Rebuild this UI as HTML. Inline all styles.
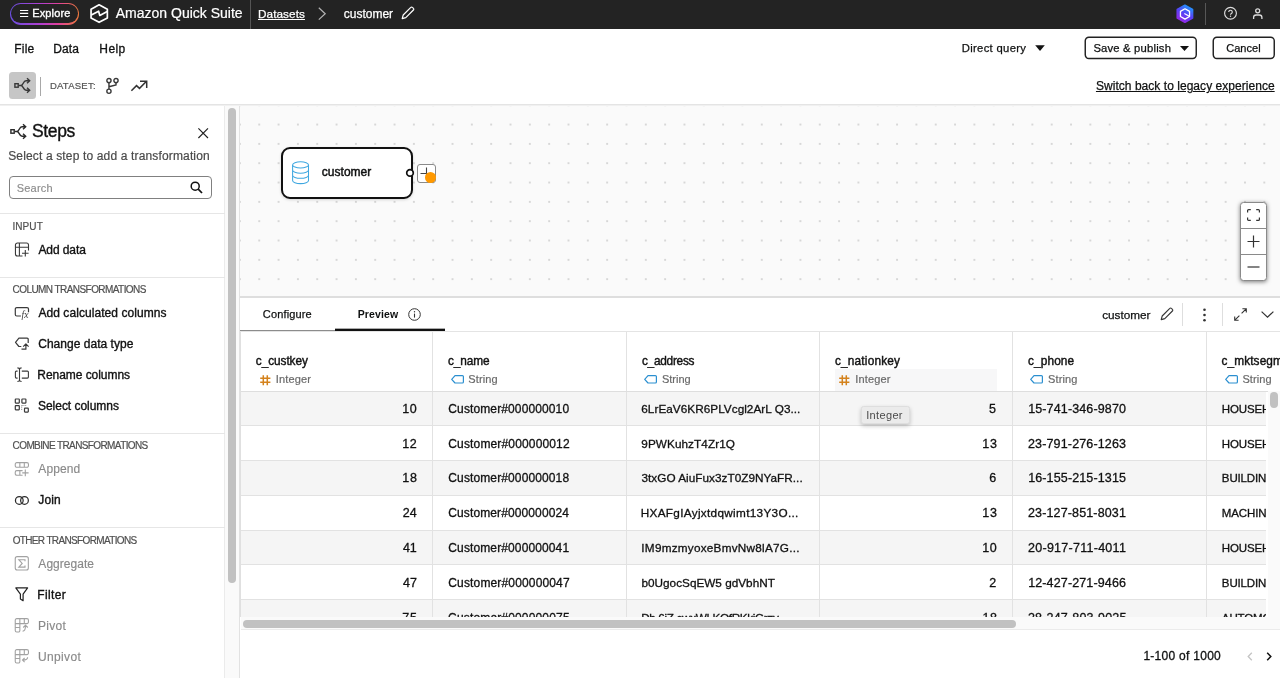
<!DOCTYPE html>
<html lang="en">
<head>
<meta charset="utf-8">
<title>customer - Amazon Quick Suite</title>
<style>
*{box-sizing:border-box;margin:0;padding:0}
html,body{width:1280px;height:678px;overflow:hidden;background:#fff}
body{font-family:"Liberation Sans",sans-serif;color:#0f1111;position:relative;font-size:12px}
.abs{position:absolute}
.t{position:absolute;white-space:nowrap;line-height:1}
svg{position:absolute;overflow:visible}
#topbar{left:0;top:0;width:1280px;height:29px;background:#232323}
#topbar .t{color:#fff}
#panel{left:0;top:105px;width:224px;height:573px;background:#fff}
#canvas{left:240px;top:105px;width:1040px;height:192px;background-color:#fafafa;background-image:radial-gradient(circle,#c2c2c2 0.5px,rgba(194,194,194,0) 1px);background-size:19.33px 19.33px;background-position:9.585px -9.465px}
.sec{-webkit-text-stroke:0.2px #505050;position:absolute;left:13px;font-size:9.5px;color:#505050;letter-spacing:-0.25px;line-height:1;white-space:nowrap}
.item{position:absolute;left:38.4px;font-size:12px;color:#111;line-height:1;white-space:nowrap;-webkit-text-stroke:0.35px #111}
.item.dis{color:#8a8a8a;-webkit-text-stroke:0.15px #8a8a8a}
.hr{position:absolute;left:0;width:225px;height:1px;background:#e6e6e6}
.trow{position:absolute;left:0;width:1200px;height:34.8px;border-bottom:1px solid #e2e2e2;background:#fff}
.trow.odd{background:#f5f5f5}
.cell{position:absolute;font-size:12px;letter-spacing:0.09px;line-height:1;white-space:nowrap;color:#111;-webkit-text-stroke:0.3px #111}
.vl{position:absolute;width:1px;background:#e2e2e2}
.hn{position:absolute;font-size:11.85px;line-height:1;white-space:nowrap;color:#111;-webkit-text-stroke:0.4px #111}
.ht{-webkit-text-stroke:0.2px #6a6a6a;position:absolute;font-size:11px;letter-spacing:0.04px;line-height:1;white-space:nowrap;color:#6a6a6a}
</style>
</head>
<body>
<div id="root" style="position:absolute;left:0;top:0;width:1280px;height:678px;will-change:transform">

<!-- TOP BAR -->
<div id="topbar" class="abs">
  <div class="abs" style="left:10px;top:2.5px;width:69px;height:22px;border-radius:11px;background:linear-gradient(90deg,#6a4fe0 0%,#b13fd0 45%,#e0409a 70%,#ee7a3c 100%)"></div>
  <div class="abs" style="left:11.4px;top:3.9px;width:66.2px;height:19.2px;border-radius:9.6px;background:#232323"></div>
  <svg style="left:20px;top:9px" width="9" height="9" viewBox="0 0 9 9"><path d="M0 1.500 H8.200 M0 4.450 H8.200 M0 7.500 H8.200" stroke="#fff" stroke-width="1.200" fill="none"/></svg>
  <div class="t" id="t_explore" style="left:32.2px;top:8px;font-size:11px;-webkit-text-stroke:0.35px #fff;letter-spacing:0.14px">Explore</div>
  <svg style="left:89px;top:3px" width="20" height="22" viewBox="0 0 20 22"><path d="M10.1 1.750 L18.350 6.200 V14.900 L10.100 19.300 L2.050 14.900 V6.200 Z" fill="none" stroke="#fff" stroke-width="1.700" stroke-linejoin="round"/><path d="M2.300 12 L9.600 8.200 L10.800 12.500 L18.200 8.400" fill="none" stroke="#fff" stroke-width="1.700" stroke-linejoin="round"/></svg>
  <div class="t" id="t_brand" style="-webkit-text-stroke:0.2px #fff;left:115.79px;top:5.5px;font-size:14px;letter-spacing:-0px">Amazon Quick Suite</div>
  <div class="abs" style="left:250px;top:0;width:1px;height:29px;background:#555"></div>
  <div class="t" id="t_datasets" style="left:258.03px;top:8px;font-size:11.75px;text-decoration:underline;text-underline-offset:1px;-webkit-text-stroke:0.25px #fff;letter-spacing:0.07px">Datasets</div>
  <svg style="left:318px;top:7px" width="9" height="14" viewBox="0 0 9 14"><path d="M0.800 0.800 L7.200 6.700 L0.800 12.600" fill="none" stroke="#b4b4b4" stroke-width="1.200"/></svg>
  <div class="t" id="t_cust" style="left:343.71px;top:8px;font-size:12px;-webkit-text-stroke:0.25px #fff;letter-spacing:0px">customer</div>
  <svg style="left:401px;top:6px" width="14" height="14" viewBox="0 0 14 14"><path d="M1.2 12.6 L2.2 9 L9.8 1.4 a1.1 1.1 0 0 1 1.6 0 l1 1 a1.1 1.1 0 0 1 0 1.6 L4.8 11.6 Z" fill="none" stroke="#fff" stroke-width="1.2" stroke-linejoin="round"/></svg>
  <!-- right icons -->
  <svg style="left:1176px;top:3.500px" width="18" height="20" viewBox="0 0 18 20"><defs><linearGradient id="qg" x1="0.75" y1="0" x2="0.25" y2="1"><stop offset="0" stop-color="#1f9bff"/><stop offset="0.5" stop-color="#5840f5"/><stop offset="1" stop-color="#9a27e6"/></linearGradient></defs><path d="M8.900 1.300 L16.550 5.500 V14 L8.900 18.200 L1.250 14 V5.500 Z" fill="url(#qg)" stroke="url(#qg)" stroke-width="1.600" stroke-linejoin="round"/><path d="M9 4.800 L13.550 7.400 V12.500 L9 15.100 L4.450 12.500 V7.400 Z" fill="none" stroke="#fff" stroke-width="1.300" stroke-linejoin="round"/><path d="M8.300 9.500 L13.300 12.200" stroke="#fff" stroke-width="1.300"/></svg>
  <div class="abs" style="left:1204.600px;top:2.500px;width:1.400px;height:22.500px;background:#575757"></div>
  <svg style="left:1223px;top:6px" width="15" height="15" viewBox="0 0 15 15"><circle cx="7.500" cy="7.250" r="5.900" fill="none" stroke="#dcdcdc" stroke-width="1.150"/><path d="M5.700 5.900 a1.800 1.700 0 1 1 2.700 1.500 c-.7.400-.9.700-.9 1.300" fill="none" stroke="#dcdcdc" stroke-width="1.100"/><circle cx="7.500" cy="10.300" r="0.700" fill="#dcdcdc"/></svg>
  <svg style="left:1252px;top:7px" width="12" height="13" viewBox="0 0 12 13"><circle cx="5.700" cy="3.800" r="2" fill="none" stroke="#dcdcdc" stroke-width="1.300"/><path d="M1.600 11.900 V10.500 a2.500 2.500 0 0 1 2.500 -2.500 h3.300 a2.500 2.500 0 0 1 2.500 2.500 V11.900" fill="none" stroke="#dcdcdc" stroke-width="1.300"/></svg>
</div>

<!-- MENU BAR -->
<div class="t" id="m_file" style="left:14.34px;top:43px;font-size:12px;-webkit-text-stroke:0.3px #111;letter-spacing:0.17px">File</div>
<div class="t" id="m_data" style="left:53.29px;top:43px;font-size:12px;-webkit-text-stroke:0.3px #111;letter-spacing:0.09px">Data</div>
<div class="t" id="m_help" style="left:99.34px;top:43px;font-size:12px;letter-spacing:0.39px;-webkit-text-stroke:0.3px #111">Help</div>

<div class="t" id="m_dq" style="left:961.74px;top:43px;font-size:11.25px;letter-spacing:0.32px;-webkit-text-stroke:0.25px #111">Direct query</div>
<svg style="left:1035px;top:45px" width="10" height="6" viewBox="0 0 10 6"><path d="M0.2 0.300 H9.800 L5 5.900 Z" fill="#111"/></svg>
<svg style="left:1084px;top:36.100px" width="114" height="24" viewBox="0 0 114 24"><rect x="1.250" y="1.250" width="111" height="21.200" rx="3.600" fill="#fff" stroke="#222" stroke-width="1.450"/></svg>
<div class="t" id="m_sp" style="left:1093.38px;top:43px;font-size:11.25px;-webkit-text-stroke:0.25px #111;letter-spacing:0.19px">Save &amp; publish</div>
<svg style="left:1180px;top:45.5px" width="9" height="5" viewBox="0 0 9 5"><path d="M0 0 H9 L4.500 5 Z" fill="#111"/></svg>
<svg style="left:1211.500px;top:36.100px" width="64" height="24" viewBox="0 0 64 24"><rect x="1.250" y="1.250" width="61" height="21.200" rx="3.600" fill="#fff" stroke="#222" stroke-width="1.450"/></svg>
<div class="t" id="m_cancel" style="left:1226.23px;top:43px;font-size:11px;-webkit-text-stroke:0.25px #111;letter-spacing:0.03px">Cancel</div>

<!-- TOOLBAR ROW -->
<div class="abs" style="left:9px;top:72px;width:27px;height:27px;border-radius:3.5px;background:#c6c6c6"></div>
<svg style="left:14px;top:77px" width="17" height="17" viewBox="0 0 17 17"><rect x="0.9" y="6.700" width="3.300" height="3.500" fill="none" stroke="#383838" stroke-width="1.400"/><path d="M4.900 8.450 H7.300 M7 8.450 C9.500 8.450 9 3.700 12 3.700 H15.300 M13 1.200 L15.700 3.700 L13 6.200 M7 8.450 C9.500 8.450 9 13.200 12 13.200 H15.300 M13 10.700 L15.700 13.200 L13 15.700" fill="none" stroke="#383838" stroke-width="1.400"/></svg>
<div class="abs" style="left:39.5px;top:77px;width:1.5px;height:19px;background:#a8a8a8"></div>
<div class="t" id="tb_ds" style="-webkit-text-stroke:0.2px #555;left:49.89px;top:81px;font-size:9.5px;color:#555;letter-spacing:0.24px">DATASET:</div>
<svg style="left:105px;top:77px" width="16" height="18" viewBox="0 0 16 18"><g fill="none" stroke="#3a3a3a" stroke-width="1.400"><circle cx="3.950" cy="3.600" r="2.100"/><circle cx="11" cy="3.600" r="2.100"/><circle cx="3.950" cy="14.250" r="2.100"/><path d="M3.950 5.700 V12.150 M11 5.700 V8 L3.950 9.800"/></g></svg>
<svg style="left:131px;top:79px" width="17" height="13" viewBox="0 0 17 13"><path d="M0.400 11.700 L5.500 6.600 L8.500 9.400 L15.500 2.300 M9 2.300 H15.700 V8.900" fill="none" stroke="#333" stroke-width="1.500"/></svg>
<div class="t" id="tb_switch" style="left:1095.95px;top:80px;font-size:12px;text-decoration:underline;text-underline-offset:1px;-webkit-text-stroke:0.25px #111;letter-spacing:0.04px">Switch back to legacy experience</div>

<div class="abs" style="left:0;top:104px;width:1280px;height:1px;background:#e4e4e4"></div><div class="abs" style="left:0;top:105px;width:1280px;height:1px;background:#f0f0f0;z-index:3"></div>

<!-- LEFT PANEL -->
<div id="panel" class="abs"></div>
<div class="abs" style="left:224px;top:105px;width:16px;height:573px;background:#fafafa;border-left:1.5px solid #ebebeb;border-right:1.7px solid #e2e2e2"></div>
<div class="abs" style="left:228px;top:108px;width:8px;height:474.5px;border-radius:4px;background:#c1c1c1"></div>

<svg style="left:10.1px;top:123.4px" width="17" height="17" viewBox="0 0 17 17"><rect x="0.9" y="6.700" width="3.300" height="3.500" fill="none" stroke="#2a2a2a" stroke-width="1.400"/><path d="M4.900 8.450 H7.300 M7 8.450 C9.500 8.450 9 3.700 12 3.700 H15.300 M13 1.200 L15.700 3.700 L13 6.200 M7 8.450 C9.500 8.450 9 13.200 12 13.200 H15.300 M13 10.700 L15.700 13.200 L13 15.700" fill="none" stroke="#2a2a2a" stroke-width="1.400"/></svg>
<div class="t" id="p_steps" style="-webkit-text-stroke:0.35px #111;left:32.04px;top:123px;font-size:17.5px;letter-spacing:-0.36px;color:#111">Steps</div>
<svg style="left:197.700px;top:128.400px" width="10.400" height="10.400" viewBox="0 0 10.400 10.400"><path d="M0.400 0.400 L10 10 M10 0.400 L0.400 10" stroke="#222" stroke-width="1.150" fill="none"/></svg>
<div class="t" id="p_sub" style="-webkit-text-stroke:0.2px #4a4a4a;left:8.18px;top:150px;font-size:12px;color:#4a4a4a;letter-spacing:0.15px">Select a step to add a transformation</div>
<div class="abs" style="left:9px;top:176px;width:203px;height:23px;border:1px solid #808080;border-radius:4px;background:#fff"></div>
<div class="t" id="p_search" style="-webkit-text-stroke:0.15px #8c8c8c;left:16.66px;top:183px;font-size:11px;color:#8c8c8c;letter-spacing:0.22px">Search</div>
<svg style="left:190px;top:181px" width="13" height="13" viewBox="0 0 13 13"><circle cx="5.2" cy="5.2" r="4" fill="none" stroke="#111" stroke-width="1.5"/><path d="M8.200 8.200 L12 12" stroke="#111" stroke-width="1.7" fill="none"/></svg>

<div class="hr" style="top:213px"></div>
<div class="sec" id="s_input" style="top:222px;font-size:10px;letter-spacing:0.09px;left:12.43px">INPUT</div>
<div class="item" id="i_adddata" style="top:244px;font-size:12px;letter-spacing:-0.09px;left:38.4px">Add data</div>

<div class="hr" style="top:277px"></div>
<div class="sec" id="s_col" style="top:285px;font-size:10px;letter-spacing:-0.57px;left:12.62px">COLUMN TRANSFORMATIONS</div>
<div class="item" id="i_calc" style="top:307px;font-size:12px;letter-spacing:0.07px;left:38.4px">Add calculated columns</div>
<div class="item" id="i_change" style="top:338px;font-size:12px;letter-spacing:0.03px;left:38.2px">Change data type</div>
<div class="item" id="i_rename" style="top:369px;font-size:12px;letter-spacing:-0.05px;left:37.31px">Rename columns</div>
<div class="item" id="i_select" style="top:400px;font-size:12px;letter-spacing:-0.03px;left:38px">Select columns</div>

<div class="hr" style="top:433px"></div>
<div class="sec" id="s_comb" style="top:441px;font-size:10px;letter-spacing:-0.61px;left:12.62px">COMBINE TRANSFORMATIONS</div>
<div class="item dis" id="i_append" style="top:463px;font-size:12px;letter-spacing:0.09px;left:38.35px">Append</div>
<div class="item" id="i_join" style="top:494px;font-size:12px;letter-spacing:0.15px;left:38.24px">Join</div>

<div class="hr" style="top:527px"></div>
<div class="sec" id="s_other" style="top:536px;font-size:10px;letter-spacing:-0.64px;left:12.64px">OTHER TRANSFORMATIONS</div>
<div class="item dis" id="i_agg" style="top:558px;font-size:12px;letter-spacing:0.03px;left:38.35px">Aggregate</div>
<div class="item" id="i_filter" style="top:589px;font-size:12px;letter-spacing:0.38px;left:37.31px">Filter</div>
<div class="item dis" id="i_pivot" style="top:620px;font-size:12px;letter-spacing:0.29px;left:37.94px">Pivot</div>
<div class="item dis" id="i_unpivot" style="top:651px;font-size:12px;letter-spacing:0.35px;left:38px">Unpivot</div>

<svg style="left:14px;top:242px" width="16" height="16" viewBox="0 0 16 16"><path d="M14.5 8.6 V3 a2 2 0 0 0 -2 -2 H3.45 a2 2 0 0 0 -2 2 V12.05 a2 2 0 0 0 2 2 H8.5 M1.45 5.3 H14.5 M5.4 0.95 V14.05 M8 11.3 H14.6 M11.3 8 V14.6" fill="none" stroke="#3a3a3a" stroke-width="1.1"/></svg>
<svg style="left:14px;top:306px" width="16" height="16" viewBox="0 0 16 16"><path d="M14.5 6.3 V3.1 a1.5 1.5 0 0 0 -1.5 -1.5 H2.8 a1.5 1.5 0 0 0 -1.5 1.5 V8.5 a1.5 1.5 0 0 0 1.5 1.5 H6.9" fill="none" stroke="#3a3a3a" stroke-width="1.2"/><text x="7.6" y="11.9" font-family="Liberation Serif, serif" font-style="italic" font-size="9.5" fill="#3a3a3a">fx</text></svg>
<svg style="left:14px;top:337px" width="16" height="16" viewBox="0 0 16 16"><path d="M14.2 6 V2.2 a1 1 0 0 0 -1 -1 H4.9 L1.5 5.4 L4.9 9.500 H7.3 M7.5 12.2 H11.9 V7.2 M9.2 9.600 L11.900 6.900 L14.600 9.600" fill="none" stroke="#3a3a3a" stroke-width="1.2" stroke-linejoin="round"/></svg>
<svg style="left:14px;top:367px" width="16" height="16" viewBox="0 0 16 16"><path d="M3.6 4.1 H2.4 a1 1 0 0 0 -1 1 V10.1 a1 1 0 0 0 1 1 H3.600 M7.8 4.100 H13.400 a1 1 0 0 1 1 1 V10.100 a1 1 0 0 1 -1 1 H7.800 M5.500 1.800 V13.600 M3.400 0.900 Q5.500 1 5.500 2.400 Q5.500 1 7.600 0.900 M3.400 14.500 Q5.500 14.400 5.500 13 Q5.500 14.400 7.600 14.500" fill="none" stroke="#3a3a3a" stroke-width="1.1"/></svg>
<svg style="left:14px;top:398px" width="16" height="16" viewBox="0 0 16 16"><g fill="none" stroke="#3a3a3a" stroke-width="1.2"><rect x="1.3" y="1" width="4" height="4.100" rx="0.500"/><rect x="7.900" y="1" width="4" height="4.100" rx="0.500"/><rect x="1.300" y="7.700" width="4" height="4.100" rx="0.500"/><rect x="10.500" y="10.200" width="3.800" height="3.900" rx="0.500"/><path d="M7.700 7.500 H12.500 M7.700 7.500 V12.300" stroke-width="0.900" stroke-dasharray="0.900 0.900" stroke="#777"/></g></svg>
<svg style="left:14px;top:461px" width="16" height="16" viewBox="0 0 16 16"><path d="M2.750 1.650 H12.950 a1.500 1.500 0 0 1 1.500 1.500 V4.750 a1.500 1.500 0 0 1 -1.500 1.500 H2.750 a1.500 1.500 0 0 1 -1.500 -1.500 V3.150 a1.500 1.500 0 0 1 1.500 -1.500 Z M5.850 1.650 V6.250 M10.300 1.650 V6.250 M8.600 9.650 H2.750 a1.500 1.500 0 0 0 -1.500 1.500 V12.700 a1.500 1.500 0 0 0 1.500 1.500 H8.600 M5.850 9.650 V14.200 M8.200 11.850 H14.600 M11.300 8.600 V15.200" fill="none" stroke="#a2a2a2" stroke-width="1.100"/></svg>
<svg style="left:14px;top:495px" width="16" height="12" viewBox="0 0 16 12"><circle cx="5.3" cy="5.4" r="3.85" fill="none" stroke="#2a2a2a" stroke-width="1.25"/><circle cx="10.500" cy="5.400" r="3.850" fill="none" stroke="#2a2a2a" stroke-width="1.250"/></svg>
<svg style="left:14px;top:555px" width="16" height="17" viewBox="0 0 16 17"><rect x="1.250" y="1.650" width="13.100" height="13.400" rx="2" fill="none" stroke="#a2a2a2" stroke-width="1.100"/><path d="M11 6.200 V4.700 H4.800 L8.200 8.400 L4.800 12.100 H11 V10.600" fill="none" stroke="#a2a2a2" stroke-width="1.100"/></svg>
<svg style="left:14px;top:586px" width="16" height="16" viewBox="0 0 16 16"><path d="M1.800 1.900 H13.600 L9.100 8.100 V14.700 L6.400 13 V8.100 Z" fill="none" stroke="#222" stroke-width="1.200" stroke-linejoin="round"/></svg>
<svg style="left:14px;top:617px" width="16" height="16" viewBox="0 0 16 16"><path d="M2.750 1.650 H12.950 a1.500 1.500 0 0 1 1.500 1.500 V5.100 a1.500 1.500 0 0 1 -1.500 1.500 H5.850 V13.500 a1.500 1.500 0 0 1 -1.500 1.500 H2.750 a1.500 1.500 0 0 1 -1.500 -1.500 V3.150 a1.500 1.500 0 0 1 1.500 -1.500 Z M5.850 1.650 V6.600 M10.300 1.650 V6.600 M1.250 6.600 H5.850 M1.250 10.500 H5.850 M8.600 14.300 Q11.500 14 11.500 9 M9.200 10.500 L11.500 8.300 L13.800 10.500" fill="none" stroke="#a2a2a2" stroke-width="1.100"/></svg>
<svg style="left:14px;top:648px" width="16" height="16" viewBox="0 0 16 16"><path d="M2.750 1.650 H12.950 a1.500 1.500 0 0 1 1.500 1.500 V5.100 a1.500 1.500 0 0 1 -1.500 1.500 H5.850 V13.500 a1.500 1.500 0 0 1 -1.500 1.500 H2.750 a1.500 1.500 0 0 1 -1.500 -1.500 V3.150 a1.500 1.500 0 0 1 1.500 -1.500 Z M5.850 1.650 V6.600 M10.300 1.650 V6.600 M1.250 6.600 H5.850 M1.250 10.500 H5.850 M13.600 9.300 Q13.600 12.100 8.900 12.100 M10.600 10 L8.500 12.100 L10.600 14.200" fill="none" stroke="#a2a2a2" stroke-width="1.100"/></svg>

<!-- CANVAS -->
<div id="canvas" class="abs"></div>
<div class="abs" id="node" style="left:281px;top:147px;width:132px;height:52px;border:2px solid #111;border-radius:9px;background:#fff;box-shadow:0 1px 3px rgba(0,0,0,.15)"></div>
<svg style="left:291px;top:160px" width="20" height="25" viewBox="0 0 20 25"><g fill="none" stroke="#3ea7e0" stroke-width="1.050"><ellipse cx="9.550" cy="4.900" rx="7.950" ry="3.100"/><path d="M1.600 4.900 V20.500 A7.950 3.100 0 0 0 17.500 20.500 V4.900 M1.600 10.100 A7.950 3.100 0 0 0 17.500 10.100 M1.600 15.200 A7.950 3.100 0 0 0 17.500 15.200"/></g></svg>
<div class="t" id="n_cust" style="left:321.87px;top:166px;font-size:12px;-webkit-text-stroke:0.45px #111;letter-spacing:0.01px">customer</div>
<svg style="left:405px;top:168px" width="10" height="10" viewBox="0 0 10 10"><circle cx="5" cy="4.900" r="3.300" fill="#fff" stroke="#111" stroke-width="1.700"/></svg>
<div class="abs" style="left:417px;top:164px;width:19px;height:19px;border:1.3px solid #8a8a8a;border-radius:3px;background:#fff"></div>
<svg style="left:420px;top:167px" width="13" height="13" viewBox="0 0 13 13"><path d="M6.5 0.5 V12.5 M0.5 6.5 H12.5" stroke="#444" stroke-width="1.1" fill="none"/></svg>
<div class="abs" style="left:425px;top:172px;width:11px;height:11px;border-radius:50%;background:#ff9900"></div>

<!-- zoom controls -->
<div class="abs" style="left:1239.5px;top:202px;width:27.5px;height:79px;border:1px solid #8a8a8a;border-radius:3.5px;background:#fff;box-shadow:0 1px 4px rgba(0,0,0,.5)"></div>
<div class="abs" style="left:1240px;top:228px;width:26.500px;height:1px;background:#8a8a8a"></div>
<div class="abs" style="left:1240px;top:254px;width:26.500px;height:1px;background:#8a8a8a"></div>
<svg style="left:1247px;top:209px" width="13" height="12" viewBox="0 0 13 12"><path d="M0.6 3.6 V1.6 a1 1 0 0 1 1 -1 H3.800 M9.200 0.6 H11.400 a1 1 0 0 1 1 1 V3.600 M12.400 8.400 V10.400 a1 1 0 0 1 -1 1 H9.200 M3.800 11.400 H1.600 a1 1 0 0 1 -1 -1 V8.400" fill="none" stroke="#333" stroke-width="1.2"/></svg>
<svg style="left:1247px;top:235px" width="13" height="13" viewBox="0 0 13 13"><path d="M6.5 0.500 V12.500 M0.500 6.500 H12.500" stroke="#333" stroke-width="1.2" fill="none"/></svg>
<svg style="left:1247px;top:266px" width="13" height="2" viewBox="0 0 13 2"><path d="M0.500 1 H12.500" stroke="#333" stroke-width="1.2" fill="none"/></svg>

<!-- BOTTOM PANEL -->
<div class="abs" style="left:240px;top:296px;width:1040px;height:2px;background:#dedede"></div>
<div class="abs" style="left:240px;top:298px;width:1040px;height:380px;background:#fff"></div>
<div class="abs" style="left:240px;top:331px;width:1040px;height:1px;background:#e4e4e4"></div><div class="abs" style="left:240px;top:330px;width:95px;height:1px;background:#8c8c8c"></div>
<div class="abs" style="left:335px;top:328.6px;width:110px;height:2.5px;background:#111"></div><div class="abs" style="left:335px;top:328px;width:110px;height:1px;background:rgba(17,17,17,.35)"></div>
<div class="t" id="b_conf" style="left:262.84px;top:309px;font-size:11px;-webkit-text-stroke:0.25px #111;letter-spacing:0.15px">Configure</div>
<div class="t" id="b_prev" style="left:357.71px;top:309px;font-size:10.5px;font-weight:bold;letter-spacing:0.13px">Preview</div>
<svg style="left:408px;top:308px" width="13" height="13" viewBox="0 0 13 13"><circle cx="6.5" cy="6.500" r="5.800" fill="none" stroke="#333" stroke-width="1"/><path d="M6.500 5.600 V9.600" stroke="#333" stroke-width="1.1"/><circle cx="6.500" cy="3.700" r="0.700" fill="#333"/></svg>
<div class="t" id="b_cust" style="left:1102.22px;top:309px;font-size:11.75px;-webkit-text-stroke:0.25px #111;letter-spacing:-0.01px">customer</div>
<svg style="left:1160px;top:307px" width="14" height="14" viewBox="0 0 14 14"><path d="M1.200 12.600 L2.200 9 L9.800 1.400 a1.100 1.100 0 0 1 1.600 0 l1 1 a1.100 1.100 0 0 1 0 1.600 L4.800 11.600 Z" fill="none" stroke="#333" stroke-width="1.100" stroke-linejoin="round"/></svg>
<div class="abs" style="left:1182px;top:303px;width:1px;height:23px;background:#dedede"></div>
<svg style="left:1203px;top:308px" width="3" height="14" viewBox="0 0 3 14"><circle cx="1.500" cy="1.800" r="1.300" fill="#333"/><circle cx="1.500" cy="7" r="1.300" fill="#333"/><circle cx="1.500" cy="12.200" r="1.300" fill="#333"/></svg>
<div class="abs" style="left:1222px;top:303px;width:1px;height:23px;background:#dedede"></div>
<svg style="left:1234px;top:308px" width="13" height="13" viewBox="0 0 13 13"><path d="M7.600 5.400 L12.200 0.800 M8.400 0.700 H12.300 V4.600 M5.400 7.600 L0.800 12.200 M0.700 8.400 V12.300 H4.600" fill="none" stroke="#333" stroke-width="1.100"/></svg>
<svg style="left:1261px;top:311px" width="13" height="7" viewBox="0 0 13 7"><path d="M0.600 0.600 L6.500 6.200 L12.400 0.600" fill="none" stroke="#333" stroke-width="1.200"/></svg>

<!-- TABLE -->
<!--TBL--><div class="abs" id="thead" style="left:240px;top:332px;width:1040px;height:60px;overflow:hidden;background:#fff">
<div class="abs" style="left:595.3px;top:37px;width:161.6px;height:21.5px;background:#f7f7f8"></div>
<div class="hn" id="hn0" style="left:15.85px;top:24px;font-size:11.85px;letter-spacing:-0.08px">c_custkey</div>
<svg style="left:19.5px;top:42.6px" width="10.600" height="10.400" viewBox="0 0 10.600 10.400"><path d="M3.3 0.2 V10.2 M7.3 0.2 V10.2 M0.2 3.2 H10.4 M0.200 7.200 H10.400" stroke="#d4821c" stroke-width="1.500" fill="none"/></svg>
<div class="ht" id="ht0" style="left:35.7px;top:42px;font-size:11px;letter-spacing:0.17px">Integer</div>
<div class="hn" id="hn1" style="left:207.98px;top:24px;font-size:11.85px;letter-spacing:-0.08px">c_name</div>
<svg style="left:210.7px;top:43.4px" width="13" height="8.600" viewBox="0 0 13 8.600"><path d="M4 0.6 H11.4 a1 1 0 0 1 1 1 V7 a1 1 0 0 1 -1 1 H4 L0.700 4.300 Z" fill="none" stroke="#2b8fd0" stroke-width="1.200" stroke-linejoin="round"/></svg>
<div class="ht" id="ht1" style="left:228.26px;top:42px;font-size:11px;letter-spacing:0.13px">String</div>
<div class="hn" id="hn2" style="left:401.96px;top:24px;font-size:11.85px;letter-spacing:-0.26px">c_address</div>
<svg style="left:404px;top:43.4px" width="13" height="8.600" viewBox="0 0 13 8.600"><path d="M4 0.6 H11.4 a1 1 0 0 1 1 1 V7 a1 1 0 0 1 -1 1 H4 L0.700 4.300 Z" fill="none" stroke="#2b8fd0" stroke-width="1.200" stroke-linejoin="round"/></svg>
<div class="ht" id="ht2" style="left:421.92px;top:42px;font-size:11px;letter-spacing:0.01px">String</div>
<div class="hn" id="hn3" style="left:594.98px;top:24px;font-size:11.85px;letter-spacing:0.18px">c_nationkey</div>
<svg style="left:598.7px;top:42.6px" width="10.600" height="10.400" viewBox="0 0 10.600 10.400"><path d="M3.3 0.2 V10.2 M7.3 0.2 V10.2 M0.2 3.2 H10.4 M0.200 7.200 H10.400" stroke="#d4821c" stroke-width="1.500" fill="none"/></svg>
<div class="ht" id="ht3" style="left:615.2px;top:42px;font-size:11px;letter-spacing:0.17px">Integer</div>
<div class="hn" id="hn4" style="left:788.07px;top:24px;font-size:11.85px;letter-spacing:0.1px">c_phone</div>
<svg style="left:790.4px;top:43.4px" width="13" height="8.600" viewBox="0 0 13 8.600"><path d="M4 0.6 H11.4 a1 1 0 0 1 1 1 V7 a1 1 0 0 1 -1 1 H4 L0.700 4.300 Z" fill="none" stroke="#2b8fd0" stroke-width="1.200" stroke-linejoin="round"/></svg>
<div class="ht" id="ht4" style="left:808.09px;top:42px;font-size:11px;letter-spacing:0.13px">String</div>
<div class="hn" id="hn5" style="left:981.45px;top:24px;font-size:11.85px;letter-spacing:0.12px">c_mktsegment</div>
<svg style="left:984.5px;top:43.4px" width="13" height="8.600" viewBox="0 0 13 8.600"><path d="M4 0.6 H11.4 a1 1 0 0 1 1 1 V7 a1 1 0 0 1 -1 1 H4 L0.700 4.300 Z" fill="none" stroke="#2b8fd0" stroke-width="1.200" stroke-linejoin="round"/></svg>
<div class="ht" id="ht5" style="left:1002.44px;top:42px;font-size:11px;letter-spacing:0.09px">String</div>
<div class="vl" style="left:192.3px;top:0;height:61px"></div>
<div class="vl" style="left:385.6px;top:0;height:61px"></div>
<div class="vl" style="left:579.2px;top:0;height:61px"></div>
<div class="vl" style="left:772px;top:0;height:61px"></div>
<div class="vl" style="left:966.1px;top:0;height:61px"></div>
<div class="abs" style="left:0;top:58.5px;width:1040px;height:1px;background:#dedede"></div>
</div>
<div class="abs" id="tbody" style="left:240px;top:391.5px;width:1026.4px;height:225.1px;overflow:hidden;background:#fff">
<div class="trow odd" style="top:0px"></div>
<div class="cell" id="c0_0" style="left:162.21px;top:11.5px;font-size:12.5px;letter-spacing:0.7px">10</div>
<div class="cell" id="c0_1" style="left:208.3px;top:11.5px;font-size:12px;letter-spacing:0.12px">Customer#000000010</div>
<div class="cell" id="c0_2" style="left:401.29px;top:11.5px;font-size:11.75px;letter-spacing:0.04px">6LrEaV6KR6PLVcgl2ArL Q3...</div>
<div class="cell" id="c0_3" style="left:749.02px;top:11.5px;font-size:12.5px;letter-spacing:1.02px">5</div>
<div class="cell" id="c0_4" style="left:788.14px;top:11.5px;font-size:12.5px;letter-spacing:0.14px">15-741-346-9870</div>
<div class="cell" id="c0_5" style="left:981.87px;top:12.5px;font-size:11.5px;letter-spacing:-0.14px">HOUSEHOLD</div>
<div class="trow" style="top:34.8px"></div>
<div class="cell" id="c1_0" style="left:162.23px;top:46.5px;font-size:12.5px;letter-spacing:0.7px">12</div>
<div class="cell" id="c1_1" style="left:208.3px;top:46.5px;font-size:12px;letter-spacing:0.15px">Customer#000000012</div>
<div class="cell" id="c1_2" style="left:401.32px;top:46.5px;font-size:11.75px;letter-spacing:0.07px">9PWKuhzT4Zr1Q</div>
<div class="cell" id="c1_3" style="left:742.37px;top:46.5px;font-size:12.5px;letter-spacing:0.6px">13</div>
<div class="cell" id="c1_4" style="left:788.01px;top:46.5px;font-size:12.5px;letter-spacing:0.15px">23-791-276-1263</div>
<div class="cell" id="c1_5" style="left:981.87px;top:47.5px;font-size:11.5px;letter-spacing:-0.14px">HOUSEHOLD</div>
<div class="trow odd" style="top:69.6px"></div>
<div class="cell" id="c2_0" style="left:162.21px;top:80.5px;font-size:12.5px;letter-spacing:0.74px">18</div>
<div class="cell" id="c2_1" style="left:208.3px;top:80.5px;font-size:12px;letter-spacing:0.12px">Customer#000000018</div>
<div class="cell" id="c2_2" style="left:401.51px;top:80.5px;font-size:11.75px;letter-spacing:0.03px">3txGO AiuFux3zT0Z9NYaFR...</div>
<div class="cell" id="c2_3" style="left:749.13px;top:80.5px;font-size:12.5px;letter-spacing:1.02px">6</div>
<div class="cell" id="c2_4" style="left:788.14px;top:80.5px;font-size:12.5px;letter-spacing:0.14px">16-155-215-1315</div>
<div class="cell" id="c2_5" style="left:981.87px;top:81.5px;font-size:11.5px;letter-spacing:-0.14px">BUILDING</div>
<div class="trow" style="top:104.4px"></div>
<div class="cell" id="c3_0" style="left:162.77px;top:115.5px;font-size:12.5px;letter-spacing:0.02px">24</div>
<div class="cell" id="c3_1" style="left:208.3px;top:115.5px;font-size:12px;letter-spacing:0.11px">Customer#000000024</div>
<div class="cell" id="c3_2" style="left:400.69px;top:115.5px;font-size:11.75px;letter-spacing:0.32px">HXAFgIAyjxtdqwimt13Y3O...</div>
<div class="cell" id="c3_3" style="left:742.37px;top:115.5px;font-size:12.5px;letter-spacing:0.6px">13</div>
<div class="cell" id="c3_4" style="left:788.01px;top:115.5px;font-size:12.5px;letter-spacing:0.14px">23-127-851-8031</div>
<div class="cell" id="c3_5" style="left:981.87px;top:116.5px;font-size:11.5px;letter-spacing:-0.14px">MACHINERY</div>
<div class="trow odd" style="top:139.2px"></div>
<div class="cell" id="c4_0" style="left:162.99px;top:150.5px;font-size:12.5px;letter-spacing:-0.07px">41</div>
<div class="cell" id="c4_1" style="left:208.3px;top:150.5px;font-size:12px;letter-spacing:0.12px">Customer#000000041</div>
<div class="cell" id="c4_2" style="left:401.36px;top:150.5px;font-size:11.75px;letter-spacing:0.24px">IM9mzmyoxeBmvNw8lA7G...</div>
<div class="cell" id="c4_3" style="left:742.37px;top:150.5px;font-size:12.5px;letter-spacing:0.54px">10</div>
<div class="cell" id="c4_4" style="left:788.01px;top:150.5px;font-size:12.5px;letter-spacing:0.27px">20-917-711-4011</div>
<div class="cell" id="c4_5" style="left:981.87px;top:151.5px;font-size:11.5px;letter-spacing:-0.14px">HOUSEHOLD</div>
<div class="trow" style="top:174px"></div>
<div class="cell" id="c5_0" style="left:162.99px;top:185.5px;font-size:12.5px;letter-spacing:-0.04px">47</div>
<div class="cell" id="c5_1" style="left:208.3px;top:185.5px;font-size:12px;letter-spacing:0.15px">Customer#000000047</div>
<div class="cell" id="c5_2" style="left:401.47px;top:185.5px;font-size:11.75px;letter-spacing:0.01px">b0UgocSqEW5 gdVbhNT</div>
<div class="cell" id="c5_3" style="left:749.16px;top:185.5px;font-size:12.5px;letter-spacing:1.02px">2</div>
<div class="cell" id="c5_4" style="left:788.14px;top:185.5px;font-size:12.5px;letter-spacing:0.14px">12-427-271-9466</div>
<div class="cell" id="c5_5" style="left:981.87px;top:186.5px;font-size:11.5px;letter-spacing:-0.14px">BUILDING</div>
<div class="trow odd" style="top:208.8px"></div>
<div class="cell" id="c6_0" style="left:162.31px;top:220.5px;font-size:12.5px;letter-spacing:0.77px">75</div>
<div class="cell" id="c6_1" style="left:208.09px;top:220.5px;font-size:12px;letter-spacing:0.16px">Customer#000000075</div>
<div class="cell" id="c6_2" style="left:401.15px;top:220.5px;font-size:11.75px;letter-spacing:-0.36px">Dh 6jZ,cwxWLKQfRKkiGrzv...</div>
<div class="cell" id="c6_3" style="left:742.41px;top:220.5px;font-size:12.5px;letter-spacing:0.67px">18</div>
<div class="cell" id="c6_4" style="left:787.96px;top:220.5px;font-size:12.5px;letter-spacing:0.18px">28-247-803-9025</div>
<div class="cell" id="c6_5" style="left:981.87px;top:221.5px;font-size:11.5px;letter-spacing:-0.14px">AUTOMOBILE</div>
<div class="vl" style="left:192.3px;top:0;height:300px"></div>
<div class="vl" style="left:385.6px;top:0;height:300px"></div>
<div class="vl" style="left:579.2px;top:0;height:300px"></div>
<div class="vl" style="left:772px;top:0;height:300px"></div>
<div class="vl" style="left:966.1px;top:0;height:300px"></div>
</div>
<div class="abs" style="left:240px;top:332px;width:1px;height:285px;background:#e0e0e0"></div>
<div class="abs" style="left:861px;top:406px;width:49.400px;height:18px;background:#ebebeb;border:0.5px solid #dedede;border-radius:2.5px;box-shadow:0 2px 4px rgba(0,0,0,.22)"></div>
<div class="t" id="tip" style="left:866.2px;top:410px;font-size:11px;color:#4a4a4a;letter-spacing:0.35px">Integer</div><!--/TBL-->

<!-- hscroll -->
<div class="abs" style="left:241px;top:617px;width:1039px;height:13px;background:#fafafa;border-bottom:1px solid #ebebeb"></div>
<div class="abs" style="left:243px;top:620px;width:773px;height:8px;border-radius:4px;background:#c1c1c1"></div>
<!-- vscroll -->
<div class="abs" style="left:1268px;top:391px;width:12px;height:226px;background:#fafafa"></div>
<div class="abs" style="left:1270px;top:392px;width:8px;height:16px;border-radius:4px;background:#c1c1c1"></div>

<!-- footer -->
<div class="t" id="f_range" style="-webkit-text-stroke:0.3px #111;left:1143.38px;top:650px;font-size:12px;letter-spacing:0.28px">1-100 of 1000</div>
<svg style="left:1247px;top:652px" width="6" height="9" viewBox="0 0 6 9"><path d="M4.800 0.700 L1.200 4.500 L4.800 8.300" fill="none" stroke="#c4c4c4" stroke-width="1.300"/></svg>
<svg style="left:1266px;top:652px" width="6" height="9" viewBox="0 0 6 9"><path d="M1.200 0.700 L4.800 4.500 L1.200 8.300" fill="none" stroke="#111" stroke-width="1.500"/></svg>

</div>
</body>
</html>
